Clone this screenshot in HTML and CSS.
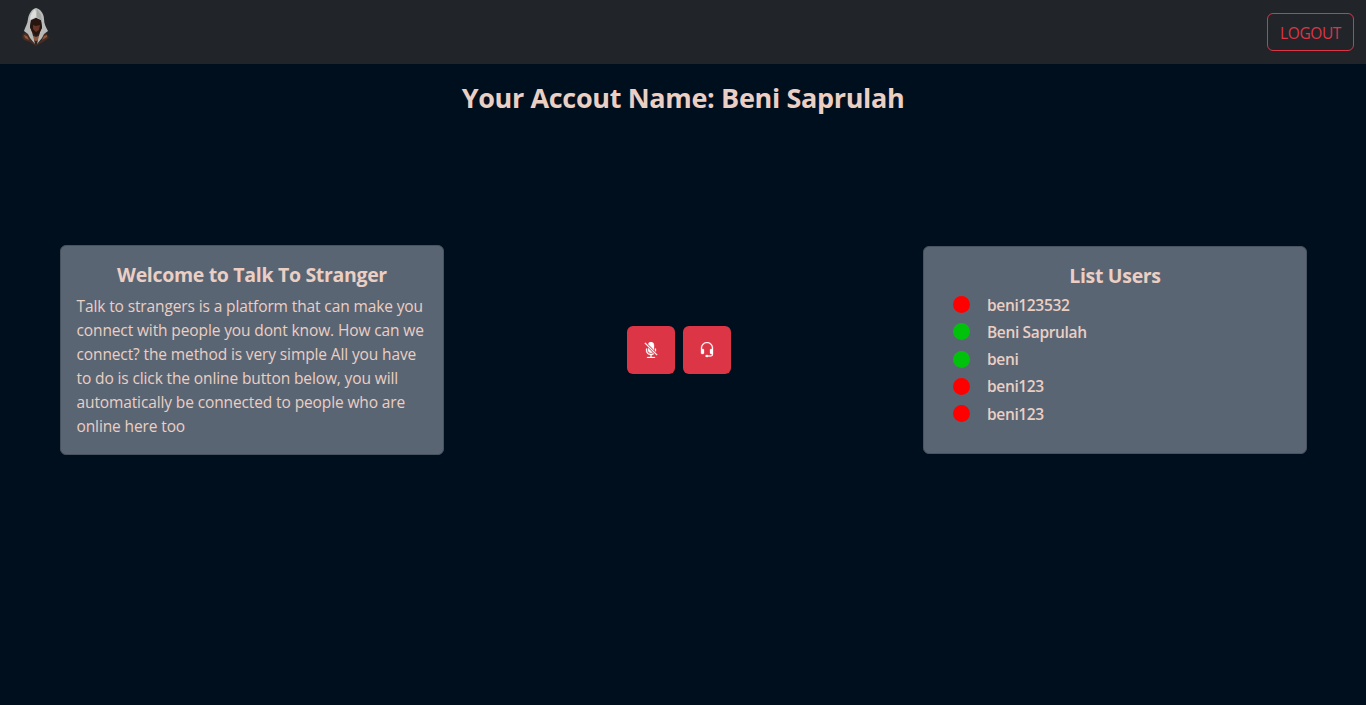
FILE: index.html
```html
<!DOCTYPE html>
<html lang="en">
<head>
<meta charset="utf-8">
<title>Talk To Stranger</title>
<link rel="stylesheet" href="styles.css">
</head>
<body>
<header class="navbar">
  <a class="brand" href="#" aria-label="Home">
    <svg class="logo" viewBox="0 0 30 40" width="30" height="40">
      <path fill="#4a2c21" d="M2 27 9 23h12l5 4 2 4-6 4-7 4-6-4-6-2-2-3z"/>
      <path fill="#2d2524" d="m8 30 3-4h9l3 5-8 7z"/>
      <path fill="#8f5b40" d="m10 28 5 2 5-2-2 5-3 1-3-1zM3 28l3 1 2 4-4-2zM26 28l-3 1-2 4 5-3z"/>
      <path fill="#b9bbb9" d="M15 1c-4 1-7 5-8 11-.4 5-3 8-4 12l4 3 2 4 5 6-2-8-1-4-2-5 1-7 5-2 5 2 1 7-2 5-1 4-2 8 5-6 2-4 4-3c-2-4-4-7-4-12C23 6 19 2 15 1z"/>
      <path fill="#dededc" d="M14 2c-3 3-5 6-5 11l6-3V5z"/>
      <path fill="#a4a7a5" d="m16 2 4 6 1 6-5-4z"/>
      <path fill="#28150f" d="m10 14 5-3 5 3 1 7-3 6-3 2-4-4-2-5z"/>
      <path fill="#663424" d="m12 18 3 1 4-1-1 5-3 2-3-3z"/>
    </svg>
  </a>
  <button class="logout">LOGOUT</button>
</header>
<main>
  <h1 class="account">Your Accout Name: Beni Saprulah</h1>
  <div class="columns">
    <section class="card">
      <h2 class="card-title">Welcome to Talk To Stranger</h2>
      <p class="intro">Talk to strangers is a platform that can make you<br>connect with people you dont know. How can we<br>connect? the method is very simple All you have<br>to do is click the online button below, you will<br>automatically be connected to people who are<br>online here too</p>
    </section>
    <div class="controls">
      <button class="control" aria-label="Microphone"><svg class="icon" width="16" height="16" viewBox="0 0 16 16"><path d="M13 8c0 .564-.094 1.107-.266 1.613l-.814-.814A4.02 4.02 0 0 0 12 8V7a.5.5 0 0 1 1 0v1zm-5 4c.818 0 1.578-.245 2.212-.667l.718.719a4.973 4.973 0 0 1-2.43.923V15h3a.5.5 0 0 1 0 1h-7a.5.5 0 0 1 0-1h3v-2.025A5 5 0 0 1 3 8V7a.5.5 0 0 1 1 0v1a4 4 0 0 0 4 4zm3-9v4.879L5.158 2.037A3.001 3.001 0 0 1 11 3z"/><path d="M9.486 10.607 5 6.12V8a3 3 0 0 0 4.486 2.607zm-7.84-9.253 12 12 .708-.708-12-12-.708.708z"/></svg></button>
      <button class="control" aria-label="Headset"><svg class="icon" width="16" height="16" viewBox="0 0 16 16"><path d="M8 1a5 5 0 0 0-5 5v1h1a1 1 0 0 1 1 1v3a1 1 0 0 1-1 1H3a1 1 0 0 1-1-1V6a6 6 0 1 1 12 0v6a2.5 2.5 0 0 1-2.5 2.5H9.366a1 1 0 0 1-.866.5h-1a1 1 0 1 1 0-2h1a1 1 0 0 1 .866.5H11.5A1.5 1.5 0 0 0 13 12h-1a1 1 0 0 1-1-1V8a1 1 0 0 1 1-1h1V6a5 5 0 0 0-5-5z"/></svg></button>
    </div>
    <section class="card users-card">
      <h2 class="card-title">List Users</h2>
      <ul class="users">
        <li class="user"><span class="dot"></span>beni123532</li>
        <li class="user"><span class="dot online"></span>Beni Saprulah</li>
        <li class="user"><span class="dot online"></span>beni</li>
        <li class="user"><span class="dot"></span>beni123</li>
        <li class="user"><span class="dot"></span>beni123</li>
      </ul>
    </section>
  </div>
</main>
</body>
</html>
```
FILE: styles.css
```css
* { box-sizing: border-box; }
body {
  margin: 0;
  height: 705px;
  overflow: hidden;
  background: #000f1e;
  color: #ebcfc4;
  font-family: "Segoe UI", "Open Sans", "Noto Sans", sans-serif;
  font-size: 16px;
  line-height: 24px;
}
h1, h2, p, ul { margin: 0; padding: 0; }
.navbar {
  height: 64px;
  padding: 0 12px 0 21px;
  display: flex;
  align-items: center;
  justify-content: space-between;
  background: #212529;
}
.brand { height: 50px; }
.logo { display: block; }
.logout {
  width: 87px;
  height: 38px;
  padding: 1px 0 0;
  border: 1px solid #dc3545;
  border-radius: 6px;
  background: transparent;
  color: #dc3545;
  font: inherit;
  font-size: 15.5px;
  letter-spacing: -0.4px;
}
.account {
  padding-top: 17px;
  height: 181px;
  text-align: center;
  font-size: 27px;
  line-height: 34px;
  font-weight: 700;
  letter-spacing: -0.34px;
  white-space: nowrap;
}
.columns {
  display: grid;
  grid-template-columns: 384px 1fr 384px;
  align-items: center;
  padding: 0 59px 0 60px;
}
.card {
  height: 210px;
  padding: 17px 15.5px;
  border: 1px solid #49535f;
  border-radius: 6px;
  background: #5a6573;
}
.users-card { height: 208px; }
.card-title {
  margin-bottom: 7px;
  text-align: center;
  font-size: 19.5px;
  line-height: 24px;
  font-weight: 700;
  letter-spacing: -0.32px;
  white-space: nowrap;
}
.intro {
  font-size: 15.5px;
  letter-spacing: -0.12px;
  white-space: nowrap;
}
.controls {
  display: flex;
  gap: 8px;
  justify-content: center;
  padding-right: 10px;
}
.control {
  width: 48px;
  height: 48px;
  padding: 0;
  display: grid;
  place-items: center;
  border: 0;
  border-radius: 6px;
  background: #dc3545;
  color: #fff;
}
.icon {
  fill: currentColor;
  stroke: currentColor;
  stroke-width: 0.3;
}
.users { list-style: none; padding-left: 13.5px; margin-top: -4px; }
.user {
  display: flex;
  align-items: center;
  gap: 17px;
  height: 27.25px;
  font-size: 15.5px;
  font-weight: 600;
  letter-spacing: -0.35px;
}
.dot {
  width: 17px;
  height: 17px;
  border-radius: 50%;
  background: #f00;
}
.dot.online { background: #00c20b; }
```
